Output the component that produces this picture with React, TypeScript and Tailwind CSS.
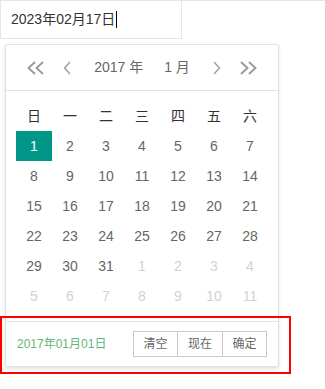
import React from "react";

const FONT = { fontFamily: '"Liberation Sans", Arial, "Noto Sans CJK SC", sans-serif' };

const WEEK = ["日", "一", "二", "三", "四", "五", "六"];

type Cell = { d: number; other?: boolean; on?: boolean };

const ROWS: Cell[][] = [
  [1, 2, 3, 4, 5, 6, 7].map((d) => ({ d, on: d === 1 })),
  [8, 9, 10, 11, 12, 13, 14].map((d) => ({ d })),
  [15, 16, 17, 18, 19, 20, 21].map((d) => ({ d })),
  [22, 23, 24, 25, 26, 27, 28].map((d) => ({ d })),
  [
    { d: 29 },
    { d: 30 },
    { d: 31 },
    { d: 1, other: true },
    { d: 2, other: true },
    { d: 3, other: true },
    { d: 4, other: true },
  ],
  [5, 6, 7, 8, 9, 10, 11].map((d) => ({ d, other: true })),
];

function Chevron({ dir, double }: { dir: "l" | "r"; double?: boolean }) {
  const w = double ? 17 : 8;
  const flip = dir === "r" ? `translate(${w} 0) scale(-1 1)` : undefined;
  return (
    <svg width={w} height="14" viewBox={`0 0 ${w} 14`} className="shrink-0">
      <g transform={flip} fill="none" stroke="#999" strokeWidth={double ? 1.9 : 1.3}>
        {double ? (
          <>
            <path d="M8 1 L1.5 7 L8 13" />
            <path d="M16 1 L9.5 7 L16 13" />
          </>
        ) : (
          <path d="M7 1 L1.5 7 L7 13" />
        )}
      </g>
    </svg>
  );
}

export default function App() {
  return (
    <div className="relative h-[389px] w-[325px] bg-white" style={FONT}>
      <div className="border-t border-[#e6e6e6]">
        <div className="flex h-[38px] w-[182px] items-center border-x border-b border-[#e6e6e6] pl-[10px] text-[14px] text-[#333]">
          <span>2023年02月17日</span>
          <span className="ml-px h-[17px] w-px bg-black" />
        </div>
      </div>

      <div className="ml-[5px] mt-[5px] w-[274px] rounded-[2px] border border-[#e2e2e2] bg-white shadow-[0_2px_4px_rgba(0,0,0,0.12)]">
        <div className="flex h-[46px] items-center border-b border-[#e2e2e2] px-[21px]">
          <Chevron dir="l" double />
          <span className="ml-[19px] flex">
            <Chevron dir="l" />
          </span>
          <div className="flex flex-1 justify-center gap-[21px] text-[14px] text-[#666]">
            <span>2017 年</span>
            <span>1 月</span>
          </div>
          <span className="mr-[19px] flex">
            <Chevron dir="r" />
          </span>
          <Chevron dir="r" double />
        </div>

        <div className="p-[10px]">
          <div className="grid grid-cols-7">
            {WEEK.map((w) => (
              <div key={w} className="flex h-[30px] items-center justify-center text-[14px] text-[#333]">
                {w}
              </div>
            ))}
            {ROWS.flat().map((c, i) => (
              <div
                key={i}
                className={`flex h-[30px] items-center justify-center text-[14px] ${
                  c.on ? "bg-[#009688] text-white" : c.other ? "text-[#d2d2d2]" : "text-[#666]"
                }`}
              >
                {c.d}
              </div>
            ))}
          </div>
        </div>

        <div className="flex h-[45px] items-center justify-between border-t border-[#e2e2e2] pl-[11px] pr-[11px]">
          <span className="text-[12px] text-[#5FB878]">2017年01月01日</span>
          <div className="flex">
            {["清空", "现在", "确定"].map((b, i) => (
              <div
                key={b}
                className={`flex h-[26px] items-center justify-center border border-[#C9C9C9] text-[12px] text-[#666] ${
                  i === 1 ? "w-[46px]" : "w-[45px]"
                } ${i > 0 ? "-ml-px" : ""}`}
              >
                {b}
              </div>
            ))}
          </div>
        </div>
      </div>

      <div className="absolute left-0 top-[316px] h-[58px] w-[291px] border-2 border-[#ff0000]" />
    </div>
  );
}
